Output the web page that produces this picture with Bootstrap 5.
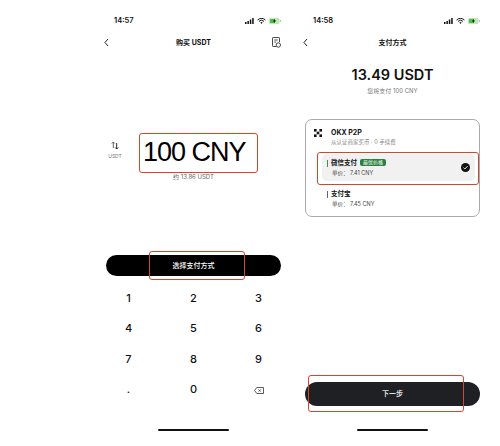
<!DOCTYPE html>
<html lang="zh-CN">
<head>
    <meta charset="UTF-8">
    <meta name="viewport" content="width=device-width, initial-scale=1.0">
    <title>购买 USDT</title>
    <link rel="stylesheet" href="https://cdn.jsdelivr.net/npm/bootstrap@5.3.0/dist/css/bootstrap.min.css">
    <style>
        body {
            background-color: #fff;
            font-family: "Inter", "Noto Sans CJK SC", sans-serif;
            color: #111;
            width: 500px;
            height: 446px;
            overflow: hidden;
        }
        .phones { padding-left: 96px; width: 500px; height: 446px; }
        .phone { position: relative; width: 195px; height: 446px; padding: 0 10px; }
        .phone-two { margin-left: 4px; }
        .status-row { height: 12px; margin-top: 15px; padding: 0 0 0 8px; font-size: 7.5px; font-weight: 600; line-height: 12px; }
        .status-icons { gap: 3px; }
        .nav-row { position: relative; height: 16px; margin-top: 8px; font-size: 7px; font-weight: 700; line-height: 16px; text-align: center; }
        .nav-back { position: absolute; left: -2px; top: 3px; }
        .nav-doc { position: absolute; right: 0; top: 2px; }
        .amount-row { margin-top: 78px; height: 46px; }
        .swap-side { width: 18px; font-size: 5px; color: #777; line-height: 6px; text-align: center; margin-bottom: 4px; }
        .swap-icon { display: block; margin: 0 auto 3px; }
        .amount-big { font-family: "Liberation Sans", sans-serif; font-size: 27px; line-height: 46px; font-weight: 400; color: #000; padding-left: 19px; letter-spacing: -1px; }
        .about-line { font-size: 6px; color: #666; line-height: 8px; text-align: center; margin-top: -2px; }
        .btn-choose { display: block; width: 100%; height: 21px; margin-top: 74px; padding: 0; background: #000; color: #fff; border: 0; border-radius: 11px; font-size: 7px; font-weight: 500; line-height: 21px; }
        .keypad { margin: 7px -10px 0; display: grid; grid-template-columns: 1fr 1fr 1fr; grid-auto-rows: 30.4px; font-size: 11px; font-weight: 500; line-height: 30.4px; text-align: center; }
        .home-bar { position: absolute; left: 62px; top: 429px; width: 71px; height: 2px; background: #111; border-radius: 1px; }
        .pay-total { margin-top: 14px; font-size: 14.5px; font-weight: 600; line-height: 20px; text-align: center; color: #111; }
        .pay-sub { font-size: 6px; line-height: 8px; color: #777; text-align: center; margin-top: 2px; }
        .pay-box { height: 98px; margin-top: 24px; border: 1px solid #aaa; border-radius: 7px; padding: 8px 4px 0 8px; }
        .okx-name { font-size: 7px; font-weight: 700; line-height: 9px; margin-left: 9px; }
        .okx-sub { font-size: 5.5px; color: #888; line-height: 8px; margin: 1px 0 0 17px; }
        .way-row { position: relative; height: 27px; border-radius: 5px; padding: 4px 0 0 9px; margin: 4px 0 0 8px; }
        .way-on { background: #f1f1f1; margin-top: 8px; }
        .way-tick { position: absolute; left: 5px; top: 6px; width: 1px; height: 7px; }
        .way-name { font-size: 6.5px; font-weight: 700; line-height: 10px; }
        .way-tag { display: inline-block; background: #2f7d3f; color: #d8eedd; font-size: 5px; font-weight: 500; line-height: 7px; padding: 0 3px; border-radius: 2px; margin-left: 3px; vertical-align: 1px; }
        .way-price { font-size: 5.5px; color: #444; line-height: 8px; margin-top: 1px; margin-left: 1px; }
        .way-check { position: absolute; right: 5px; top: 9px; }
        .btn-next { position: absolute; left: 10px; top: 382px; width: 175px; height: 24px; padding: 0; background: #1e2024; color: #ddd; border: 0; border-radius: 12px; font-size: 7px; font-weight: 600; }
        .red-box { position: absolute; border: 1.5px solid #d5452c; border-radius: 3px; pointer-events: none; }
        .box-amount { left: 43px; top: 133px; width: 119px; height: 40px; }
        .box-choose { left: 53px; top: 251px; width: 96px; height: 29px; }
        .box-wechat { left: 22px; top: 152px; width: 162px; height: 33px; }
        .box-next { left: 13px; top: 375px; width: 156px; height: 37px; }
    </style>
</head>
<body>
    <div class="phones d-flex">
        <div class="phone">
            <div class="status-row d-flex justify-content-between align-items-center">
                <span>14:57</span>
                <span class="status-icons d-flex align-items-center">
                    <svg width="9" height="6" viewBox="0 0 9 6"><rect x="0" y="4" width="1.5" height="2" fill="#111"/><rect x="2.4" y="3" width="1.5" height="3" fill="#111"/><rect x="4.8" y="1.5" width="1.5" height="4.5" fill="#111"/><rect x="7.2" y="0" width="1.5" height="6" fill="#111"/></svg>
                    <svg width="9" height="6" viewBox="0 0 9 6"><path d="M.6 2a5.5 5.5 0 0 1 7.8 0M2 3.4a3.5 3.5 0 0 1 5 0" fill="none" stroke="#111" stroke-width="1"/><path d="M3.4 4.6a1.5 1.5 0 0 1 2.2 0L4.5 6z" fill="#111"/></svg>
                    <svg width="12" height="6" viewBox="0 0 12 6"><rect x="0" y="0" width="10.5" height="6" rx="1.5" fill="#bde8b4"/><rect x="1" y="1" width="5" height="4" fill="#4cc04c"/><path d="M6 .8 3.8 3.4h1.6L4.8 5.2 7.2 2.6H5.6z" fill="#111"/><rect x="11" y="2" width="1" height="2" fill="#bbb"/></svg>
                </span>
            </div>
            <div class="nav-row">
                <svg class="nav-back" width="5" height="9" viewBox="0 0 5 9"><path d="M4 1 1 4.5 4 8" fill="none" stroke="#222" stroke-width="1"/></svg>
                购买 USDT
                <svg class="nav-doc" width="9" height="11" viewBox="0 0 9 11"><path d="M4 9.5H1.2a.7.7 0 0 1-.7-.7V1.2A.7.7 0 0 1 1.2.5h5.6a.7.7 0 0 1 .7.7V5M2.3 3h3.4M2.3 5h1.8" fill="none" stroke="#333" stroke-width=".9"/><circle cx="6.3" cy="8" r="2.2" fill="none" stroke="#333" stroke-width=".9"/></svg>
            </div>
            <div class="amount-row d-flex align-items-center">
                <div class="swap-side">
                    <svg class="swap-icon" width="8" height="9" viewBox="0 0 8 9"><path d="M2.3 7V1M.8 2.5 2.3 1l1.5 1.5" fill="none" stroke="#555" stroke-width=".9"/><path d="M5.7 2v6M4.2 6.5 5.7 8l1.5-1.5" fill="none" stroke="#111" stroke-width=".9"/></svg>
                    USDT
                </div>
                <div class="amount-big">100 CNY</div>
            </div>
            <div class="about-line">约 13.86 USDT</div>
            <button class="btn-choose">选择支付方式</button>
            <div class="keypad">
                <div>1</div><div>2</div><div>3</div>
                <div>4</div><div>5</div><div>6</div>
                <div>7</div><div>8</div><div>9</div>
                <div>.</div><div>0</div>
                <div><svg width="10" height="7" viewBox="0 0 10 7"><path d="M2.8.5h6.7v6H2.8L.6 3.5z" fill="none" stroke="#333" stroke-width=".8"/><path d="M4.6 2.4 6.8 4.6M6.8 2.4 4.6 4.6" stroke="#333" stroke-width=".8"/></svg></div>
            </div>
            <div class="home-bar"></div>
            <div class="red-box box-amount"></div>
            <div class="red-box box-choose"></div>
        </div>

        <div class="phone phone-two">
            <div class="status-row d-flex justify-content-between align-items-center">
                <span>14:58</span>
                <span class="status-icons d-flex align-items-center">
                    <svg width="9" height="6" viewBox="0 0 9 6"><rect x="0" y="4" width="1.5" height="2" fill="#111"/><rect x="2.4" y="3" width="1.5" height="3" fill="#111"/><rect x="4.8" y="1.5" width="1.5" height="4.5" fill="#111"/><rect x="7.2" y="0" width="1.5" height="6" fill="#111"/></svg>
                    <svg width="9" height="6" viewBox="0 0 9 6"><path d="M.6 2a5.5 5.5 0 0 1 7.8 0M2 3.4a3.5 3.5 0 0 1 5 0" fill="none" stroke="#111" stroke-width="1"/><path d="M3.4 4.6a1.5 1.5 0 0 1 2.2 0L4.5 6z" fill="#111"/></svg>
                    <svg width="12" height="6" viewBox="0 0 12 6"><rect x="0" y="0" width="10.5" height="6" rx="1.5" fill="#bde8b4"/><rect x="1" y="1" width="5" height="4" fill="#4cc04c"/><path d="M6 .8 3.8 3.4h1.6L4.8 5.2 7.2 2.6H5.6z" fill="#111"/><rect x="11" y="2" width="1" height="2" fill="#bbb"/></svg>
                </span>
            </div>
            <div class="nav-row">
                <svg class="nav-back" width="5" height="9" viewBox="0 0 5 9"><path d="M4 1 1 4.5 4 8" fill="none" stroke="#222" stroke-width="1"/></svg>
                支付方式
            </div>
            <div class="pay-total">13.49 USDT</div>
            <div class="pay-sub">您将支付 100 CNY</div>
            <div class="pay-box">
                <div class="d-flex align-items-center">
                    <svg width="8" height="8" viewBox="0 0 8 8"><rect x="0" y="0" width="2.6" height="2.6" fill="#111"/><rect x="5.4" y="0" width="2.6" height="2.6" fill="#111"/><rect x="2.7" y="2.7" width="2.6" height="2.6" fill="#111"/><rect x="0" y="5.4" width="2.6" height="2.6" fill="#111"/><rect x="5.4" y="5.4" width="2.6" height="2.6" fill="#111"/></svg>
                    <span class="okx-name">OKX P2P</span>
                </div>
                <div class="okx-sub">从认证商家买币 · 0 手续费</div>
                <div class="way-row way-on">
                    <span class="way-tick" style="background:#3f8f55"></span>
                    <div class="way-name">微信支付<span class="way-tag">最优价格</span></div>
                    <div class="way-price">单价： 7.41 CNY</div>
                    <svg class="way-check" width="9" height="9" viewBox="0 0 9 9"><circle cx="4.5" cy="4.5" r="4.5" fill="#111"/><path d="M2.4 4.6 3.9 6l2.7-2.9" fill="none" stroke="#fff" stroke-width=".9"/></svg>
                </div>
                <div class="way-row">
                    <span class="way-tick" style="background:#4a66a8"></span>
                    <div class="way-name">支付宝</div>
                    <div class="way-price">单价： 7.45 CNY</div>
                </div>
            </div>
            <button class="btn-next">下一步</button>
            <div class="home-bar"></div>
            <div class="red-box box-wechat"></div>
            <div class="red-box box-next"></div>
        </div>
    </div>
    <script src="https://cdn.jsdelivr.net/npm/bootstrap@5.3.0/dist/js/bootstrap.bundle.min.js"></script>
</body>
</html>
